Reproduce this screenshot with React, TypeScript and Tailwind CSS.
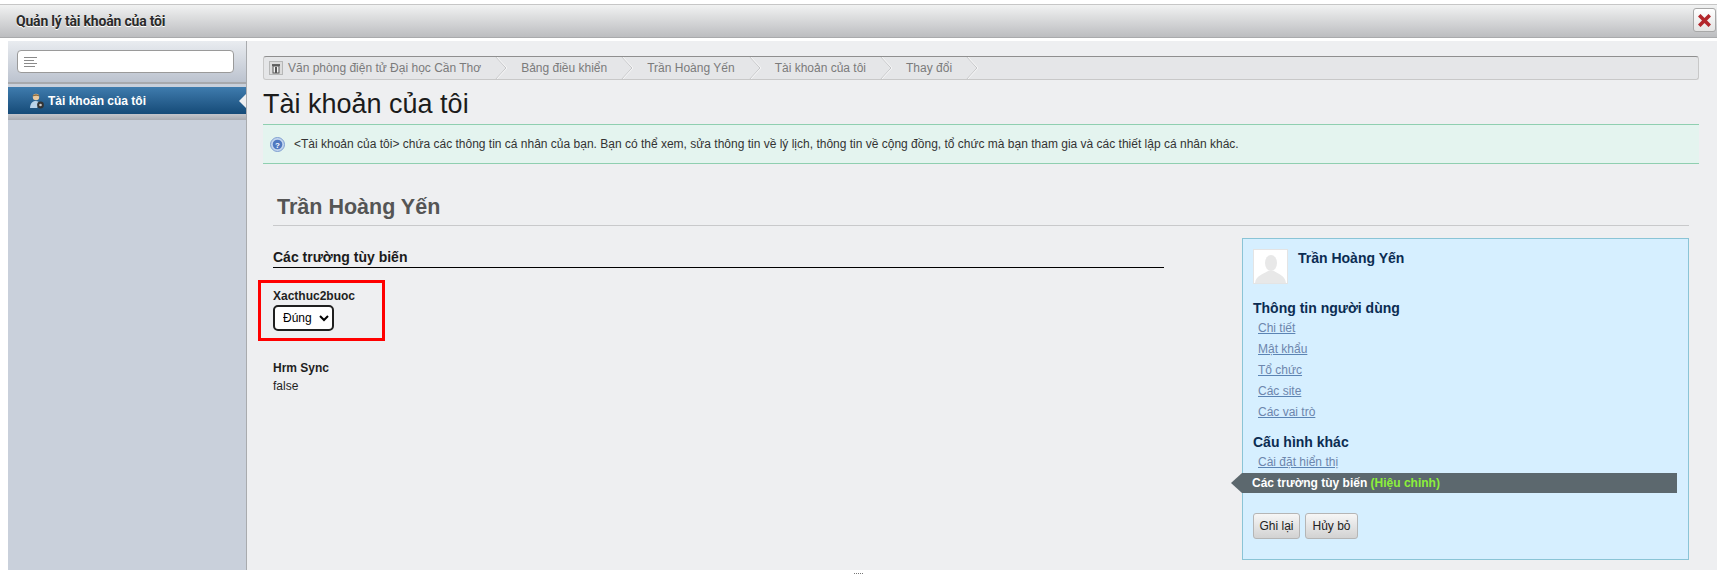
const crumbs = ['Bảng điều khiển', 'Trần Hoàng Yến', 'Tài khoản của tôi', 'Thay đổi']
const userLinks = ['Chi tiết', 'Mật khẩu', 'Tổ chức', 'Các site', 'Các vai trò']

function Chevron() {
  return (
    <svg width="12" height="24" viewBox="0 0 12 24" className="shrink-0">
      <path d="M0 0 L11 12 L0 24" fill="none" stroke="#c4c5c7" strokeWidth="1" />
      <path d="M1 0 L12 12 L1 24" fill="none" stroke="#f6f6f7" strokeWidth="1" />
    </svg>
  )
}

function UserIcon() {
  return (
    <svg width="16" height="16" viewBox="0 0 16 16" className="shrink-0">
      <circle cx="7" cy="4" r="3.2" fill="#e9c9a0" />
      <path d="M3.5 3.5 C4 0.5 10 0.5 10.5 3.5 C8.5 2.5 6 2.5 3.5 3.5 Z" fill="#8a6a3c" />
      <path d="M1 15 C1.5 9.5 4 8 7 8 C9 8 10 9 11 10 L8 15 Z" fill="#b9d3ea" />
      <circle cx="11.5" cy="12" r="3.4" fill="#333" />
      <circle cx="11.5" cy="12" r="1.3" fill="#ccc" />
    </svg>
  )
}

function HomeIcon() {
  return (
    <svg width="14" height="14" viewBox="0 0 14 14" className="shrink-0">
      <rect x="0.5" y="0.5" width="13" height="13" fill="#dcdcdc" stroke="#8c8c8c" strokeDasharray="1 1" />
      <rect x="3" y="3" width="8" height="2" fill="#666" />
      <rect x="4" y="5" width="6" height="7" fill="#f2f2f2" stroke="#555" />
      <rect x="6" y="6" width="2" height="6" fill="#555" />
    </svg>
  )
}

function HelpIcon() {
  return (
    <svg width="15" height="15" viewBox="0 0 15 15" className="shrink-0">
      <circle cx="7.5" cy="7.5" r="7" fill="#c3d5ee" stroke="#7f9fd0" />
      <circle cx="7.5" cy="7.5" r="4.8" fill="#5078c0" />
      <text x="7.5" y="10.5" textAnchor="middle" fontSize="8" fontWeight="700" fill="#fff" fontFamily="Liberation Sans">?</text>
    </svg>
  )
}

function Avatar() {
  return (
    <div className="w-[35px] h-[35px] shrink-0 bg-white border border-[#e4e4e4]">
      <svg width="33" height="33" viewBox="0 0 33 33">
        <ellipse cx="17" cy="13" rx="6" ry="8" fill="#e8e8e8" />
        <path d="M1 33 C2 25 10 24 14 21 L20 21 C24 24 31 25 32 33 Z" fill="#e8e8e8" />
      </svg>
    </div>
  )
}

export default function App() {
  return (
    <div className="w-[1717px] h-[575px] overflow-hidden bg-white relative font-['Liberation_Sans',Arial,sans-serif] text-[12px] text-[#1f1f1f]">
      {/* title bar */}
      <div className="mt-[4px] h-[34px] border-t border-b border-t-[#c6c6c6] border-b-[#a9aaac] bg-gradient-to-b from-[#f1f2f2] to-[#bcbdc0] flex items-center justify-between pl-[16px] pr-[1px]">
        <span className="font-['Roboto',sans-serif] font-bold text-[14px] tracking-[-0.2px] text-[#2a2a2a] [text-shadow:0_1px_0_#fff]">Quản lý tài khoản của tôi</span>
        <button className="w-[23px] h-[24px] mt-[-2px] bg-gradient-to-b from-white to-[#e4e4e4] border border-[#a8a8a8] rounded-[3px] flex items-center justify-center">
          <svg width="13" height="13" viewBox="0 0 13 13">
            <path d="M2.5 2.5 L10.5 10.5 M10.5 2.5 L2.5 10.5" stroke="#b3262b" strokeWidth="3.6" strokeLinecap="square" />
          </svg>
        </button>
      </div>

      <div className="flex mt-[3px] h-[529px] pl-[8px]">
        {/* sidebar */}
        <aside className="w-[239px] shrink-0 bg-[#c9d0db] border-r border-r-[#a9abae] flex flex-col">
          <div className="h-[43px] bg-gradient-to-b from-[#e9ecf0] to-[#bcc3cf] border-b-2 border-b-[#a7a9ad] pt-[9px] px-[9px]">
            <div className="w-[217px] h-[23px] bg-white border border-[#9a9a9a] rounded-[4px] flex flex-col justify-center gap-[2px] pl-[6px]">
              <span className="block h-px w-[13px] bg-[#8a8a8a]" />
              <span className="block h-px w-[10px] bg-[#8a8a8a]" />
              <span className="block h-px w-[13px] bg-[#8a8a8a]" />
              <span className="block h-px w-[11px] bg-[#8a8a8a]" />
            </div>
          </div>
          <div className="relative mt-[3px] h-[27px] bg-gradient-to-b from-[#3f7cae] to-[#154b78] flex items-center pl-[21px] gap-[3px]">
            <UserIcon />
            <span className="font-bold text-[12px] text-white">Tài khoản của tôi</span>
            <span className="absolute right-0 top-[7px] w-0 h-0 border-y-[7px] border-y-transparent border-r-[7px] border-r-[#eeeff1]" />
          </div>
          <div className="h-[6px] bg-gradient-to-b from-[#c4c6cb] to-[#a9acb2]" />
        </aside>

        {/* main */}
        <main className="flex-1 bg-[#eeeff1] pl-[16px] pr-[19px] pt-[15px]">
          <div className="h-[24px] border border-[#c8c8c8] border-t-[#8f8f8f] rounded-[3px] bg-[#e5e6e8] flex items-center pl-[5px] overflow-hidden text-[#7b7b7b]">
            <HomeIcon />
            <span className="ml-[5px]">Văn phòng điện tử Đại học Cần Thơ</span>
            <span className="ml-[14px]"><Chevron /></span>
            {crumbs.map((c) => (
              <span key={c} className="flex items-center">
                <span className="ml-[14px]">{c}</span>
                <span className="ml-[14px]"><Chevron /></span>
              </span>
            ))}
          </div>

          <h1 className="text-[27px] leading-[30px] mt-[9px] text-[#1b1b1b]">Tài khoản của tôi</h1>

          <div className="h-[40px] mt-[5px] bg-[#e4f4ef] border-y border-y-[#8fcfb0] flex items-center pl-[7px] gap-[9px] text-[#333]">
            <HelpIcon />
            <span>&lt;Tài khoản của tôi&gt; chứa các thông tin cá nhân của bạn. Bạn có thể xem, sửa thông tin về lý lịch, thông tin về cộng đồng, tổ chức mà bạn tham gia và các thiết lập cá nhân khác.</span>
          </div>

          <div className="ml-[10px] mr-[10px] mt-[27px] border-b border-b-[#c8c9cb] h-[35px]">
            <h2 className="pl-[4px] font-bold text-[21.5px] leading-[32px] text-[#555]">Trần Hoàng Yến</h2>
          </div>

          <div className="flex ml-[10px] mr-[10px] mt-[12px]">
            <div className="w-[891px] pt-[11px]">
              <h3 className="font-bold text-[14px] leading-[16px] text-[#1b1b1b] border-b border-b-black pb-[2px]">Các trường tùy biến</h3>
              <div className="ml-[-15px] mt-[12px] w-[127px] h-[61px] border-[3px] border-[#ff0000] pl-[12px] pt-[5px]">
                <div className="font-bold leading-[16px]">Xacthuc2buoc</div>
                <select className="mt-[1px] w-[61px] h-[26px] bg-white border-2 border-[#1f1f1f] rounded-[5px] pl-[4px] text-[12px] text-black outline-none">
                  <option>Đúng</option>
                  <option>Sai</option>
                </select>
              </div>
              <div className="mt-[19px] font-bold leading-[16px]">Hrm Sync</div>
              <div className="leading-[16px] mt-[2px]">false</div>
            </div>

            {/* right panel */}
            <div className="ml-[78px] w-[447px] h-[322px] bg-[#d6efff] border border-[#8ac4d6] pl-[10px] pt-[10px]">
              <div className="flex gap-[10px]">
                <Avatar />
                <span className="font-bold text-[14px] leading-[16px] text-[#0b2c52] mt-[1px]">Trần Hoàng Yến</span>
              </div>
              <h4 className="font-bold text-[14px] leading-[16px] text-[#0b2c52] mt-[16px]">Thông tin người dùng</h4>
              <ul className="mt-[2px] ml-[5px]">
                {userLinks.map((l) => (
                  <li key={l} className="h-[21px] leading-[21px]"><a className="underline text-[#6d86ad] decoration-[#5b84b4]">{l}</a></li>
                ))}
              </ul>
              <h4 className="font-bold text-[14px] leading-[16px] text-[#0b2c52] mt-[11px]">Cấu hình khác</h4>
              <div className="ml-[5px] h-[21px] leading-[21px] mt-[2px]"><a className="underline text-[#6d86ad] decoration-[#5b84b4]">Cài đặt hiển thị</a></div>
              <div className="relative ml-[-11px] w-[435px] h-[20px] bg-[#5c686e] flex items-center pl-[10px] font-bold">
                <span className="absolute left-[-11px] top-0 w-0 h-0 border-y-[10px] border-y-transparent border-r-[11px] border-r-[#5c686e]" />
                <span className="text-white">Các trường tùy biến&nbsp;</span>
                <span className="text-[#8cf03a]">(Hiệu chỉnh)</span>
              </div>
              <div className="flex gap-[5px] mt-[20px]">
                <button className="h-[26px] px-[5.5px] rounded-[3px] border border-[#b5b5b5] bg-gradient-to-b from-[#f6f6f6] to-[#d2d2d2] text-[12px] text-[#222]">Ghi lại</button>
                <button className="h-[26px] px-[6.5px] rounded-[3px] border border-[#b5b5b5] bg-gradient-to-b from-[#f6f6f6] to-[#d2d2d2] text-[12px] text-[#222]">Hủy bỏ</button>
              </div>
            </div>
          </div>
        </main>
      </div>

      {/* splitter handle at the bottom edge */}
      <div className="flex justify-center gap-[1px] mt-[3px] ml-[-1px]">
        {[0, 1, 2, 3, 4].map((i) => <span key={i} className="block w-[1px] h-[1px] bg-[#777]" />)}
      </div>
    </div>
  )
}
